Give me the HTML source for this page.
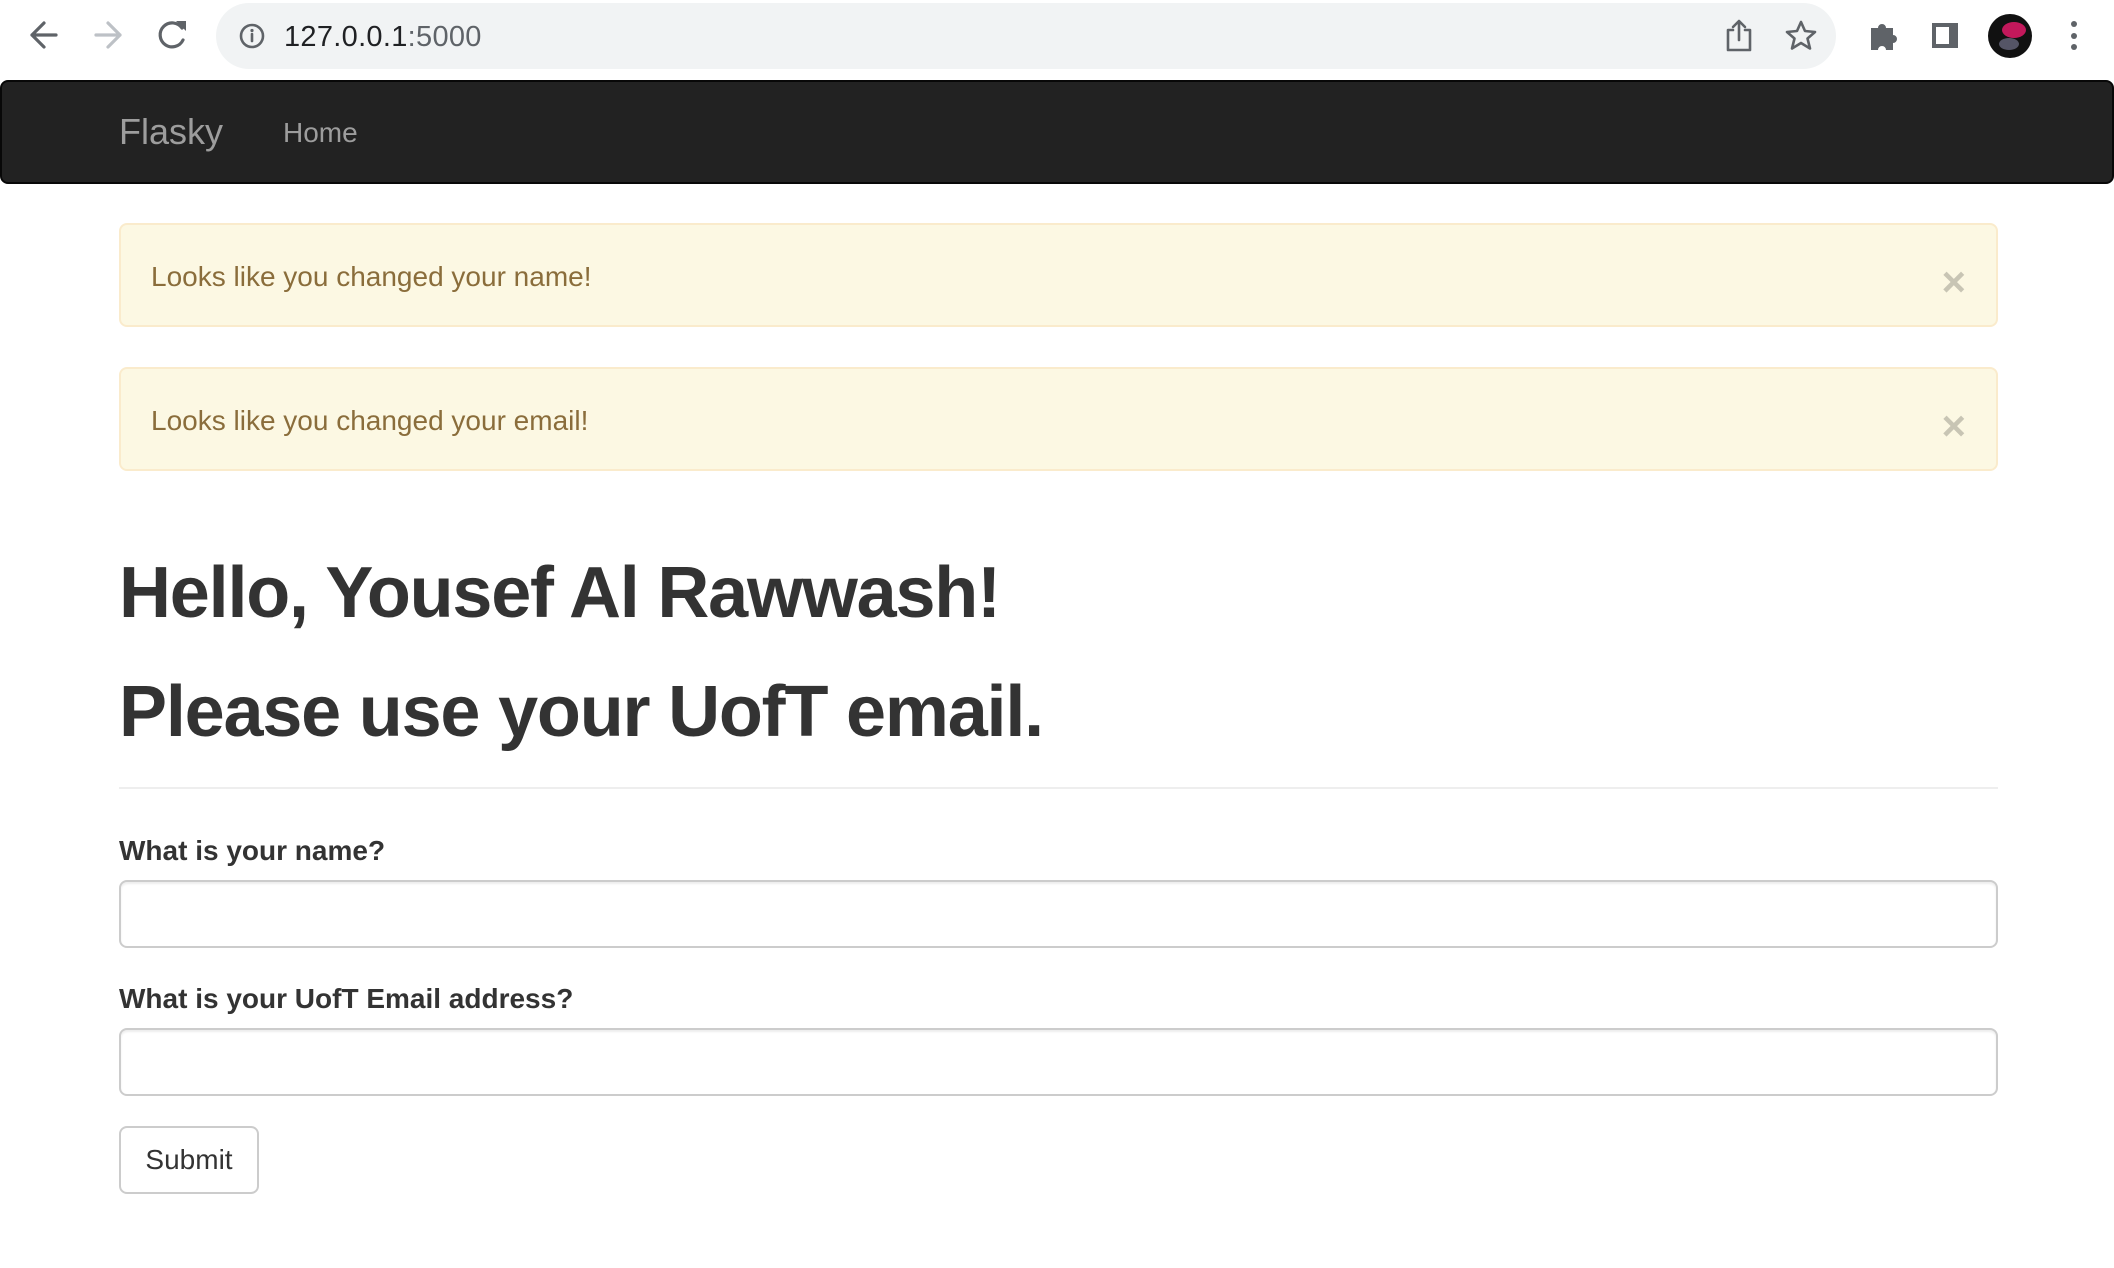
<!DOCTYPE html>
<html><head><meta charset="utf-8">
<style>
*{box-sizing:border-box;margin:0;padding:0}
html,body{width:2114px;height:1268px;overflow:hidden;background:#fff;font-family:"Liberation Sans",Helvetica,Arial,sans-serif;color:#333}
.chrome{position:absolute;left:0;top:0;width:2114px;height:80px;background:#fff}
.pill{position:absolute;left:216px;top:3px;width:1620px;height:66px;border-radius:33px;background:#f1f3f4}
.url{position:absolute;left:284px;top:21px;font-size:29px;color:#202124;letter-spacing:0.3px}
.url span{color:#5f6368}
.nav{position:absolute;left:0;top:80px;width:2114px;height:104px;background:#222;border:2px solid #080808;border-radius:8px}
.brand{position:absolute;left:117px;top:30px;font-size:36px;color:#9d9d9d;line-height:40px}
.home{position:absolute;left:281px;top:36px;font-size:28px;color:#9d9d9d;line-height:30px}
.alert{position:absolute;left:119px;width:1879px;height:104px;background:#fcf8e3;border:2px solid #faebcc;border-radius:8px;color:#8a6d3b;font-size:28px;line-height:40px;padding:32px 30px 0}
.close{position:absolute;right:30px;top:36px;font-size:42px;font-weight:bold;color:#000;opacity:.2;line-height:42px}
h1{position:absolute;left:119px;font-size:72px;font-weight:bold;line-height:80px;color:#333;letter-spacing:-1.2px}
.hr{position:absolute;left:119px;top:787px;width:1879px;height:2px;background:#eee}
label{position:absolute;left:119px;font-size:28px;font-weight:bold;line-height:40px;color:#333}
.inp{position:absolute;left:119px;width:1879px;height:68px;border:2px solid #ccc;border-radius:8px;background:#fff;box-shadow:inset 0 2px 2px rgba(0,0,0,.075)}
.btn{position:absolute;left:119px;top:1126px;width:140px;height:68px;border:2px solid #ccc;border-radius:8px;background:#fff;font-size:28px;line-height:64px;text-align:center;color:#333}
</style></head><body>
<div class="chrome">
<div class="pill"></div>
<div class="url">127.0.0.1<span>:5000</span></div>
<svg width="2114" height="80" style="position:absolute;left:0;top:0">
<g fill="none" stroke="#5f6368" stroke-width="3.2" stroke-linecap="round" stroke-linejoin="round">
<path d="M56 35H32M44 23L32 35L44 47"/>
<path d="M96 35H120M108 23L120 35L108 47" stroke="#bdc1c6"/>
<path d="M182 28A12 12 0 1 0 183 40"/>
<circle cx="252" cy="36" r="11" stroke-width="2.6"/>
<path d="M1733 30h-5v20h22v-20h-5M1739 40V22M1733 27l6-6l6 6" stroke-width="2.6"/>
<path d="M1801 22l4 9l10 1l-7.5 6.5l2.5 10l-9-5.5l-9 5.5l2.5-10l-7.5-6.5l10-1z" stroke-width="2.6"/>
</g>
<path d="M176 21h10v10z" fill="#5f6368"/>
<path d="M252 34v7" stroke="#5f6368" stroke-width="2.6" stroke-linecap="round"/>
<circle cx="252" cy="30.5" r="1.6" fill="#5f6368"/>
<path d="M1871 28h7a4 4 0 0 1 8 0h7v7a4 4 0 0 1 0 8v7h-7a4 4 0 0 0-8 0h-7z" fill="#5f6368"/>
<rect x="1932" y="23" width="26" height="25" fill="#5f6368"/><rect x="1936" y="27" width="13" height="17" fill="#fff"/>
<circle cx="2010" cy="36" r="22" fill="#111"/><ellipse cx="2014" cy="30" rx="12" ry="8" fill="#c2185b"/><ellipse cx="2009" cy="44" rx="10" ry="6" fill="#556"/>
<circle cx="2074" cy="24" r="3" fill="#5f6368"/><circle cx="2074" cy="36" r="3" fill="#5f6368"/><circle cx="2074" cy="47" r="3" fill="#5f6368"/>
</svg>
</div>
<div class="nav"><div class="brand">Flasky</div><div class="home">Home</div></div>
<div class="alert" style="top:223px">Looks like you changed your name!<div class="close">×</div></div>
<div class="alert" style="top:367px">Looks like you changed your email!<div class="close">×</div></div>
<h1 style="top:553px">Hello, Yousef Al Rawwash!</h1>
<h1 style="top:672px">Please use your UofT email.</h1>
<div class="hr"></div>
<label style="top:831px">What is your name?</label>
<div class="inp" style="top:880px"></div>
<label style="top:979px">What is your UofT Email address?</label>
<div class="inp" style="top:1028px"></div>
<div class="btn">Submit</div>
</body></html>
